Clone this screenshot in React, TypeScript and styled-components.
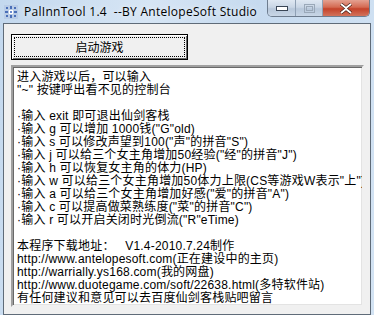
import React from "react";
import styled, { createGlobalStyle } from "styled-components";

const GlobalStyle = createGlobalStyle`
  html, body {
    margin: 0;
    padding: 0;
    background: #c8daee;
  }
`;

const Window = styled.div`
  width: 374px;
  height: 315px;
  box-sizing: border-box;
  display: flex;
  flex-direction: column;
  padding: 0 3px 3px 3px;
  background: linear-gradient(100deg, #c3d8ee 0%, #d6e5f4 35%, #c6daef 60%, #d3e3f3 100%);
  font-family: "Liberation Sans", "Noto Sans CJK SC", sans-serif;
`;

const TitleBar = styled.div`
  height: 23px;
  display: flex;
  align-items: flex-start;
  flex-shrink: 0;
`;

const AppIcon = styled.svg`
  width: 14px;
  height: 14px;
  margin: 5px 0 0 1px;
`;

const Title = styled.span`
  margin: 4px 0 0 6px;
  font-family: "Open Sans", "Noto Sans", sans-serif;
  font-size: 12px;
  letter-spacing: 0.28px;
  line-height: 15px;
  color: #000;
  text-shadow: 0 0 6px rgba(255, 255, 255, 0.9);
  white-space: pre;
`;

const Controls = styled.div`
  margin-left: auto;
  margin-right: 1px;
  display: flex;
  height: 16px;
  border: 1px solid #6d7c8e;
  border-top: none;
  border-radius: 0 0 5px 5px;
  overflow: hidden;
`;

const CtrlButton = styled.div<{ $w: number; $close?: boolean }>`
  width: ${(p) => p.$w}px;
  display: flex;
  align-items: center;
  justify-content: center;
  border-left: ${(p) => (p.$close ? "1px solid #7a4a44" : "none")};
  & + & {
    border-left: 1px solid #8fa0b4;
  }
  background: ${(p) =>
    p.$close
      ? "linear-gradient(#e4a191 0%, #d46a52 45%, #c4422a 55%, #d2735c 100%)"
      : "linear-gradient(#dfe8f2 0%, #c9d6e5 45%, #b7c7da 55%, #c8d6e6 100%)"};
`;

const Client = styled.div`
  flex: 1;
  display: flex;
  flex-direction: column;
  background: #f0f0f0;
  border: 1px solid #5f6b78;
  padding: 10px 5px 7px 7px;
`;

const LaunchButton = styled.button`
  width: 177px;
  height: 26px;
  padding: 2px;
  box-sizing: border-box;
  border: 1px solid #000;
  background: #f0f0f0;
  box-shadow: inset 1px 1px 0 #fff, inset -1px -1px 0 #696969;
  font-family: "Noto Sans CJK SC", sans-serif;
  font-size: 12px;
  color: #000;
  display: flex;
`;

const FocusRing = styled.span`
  flex: 1;
  border: 1px dotted #000;
  display: flex;
  align-items: center;
  justify-content: center;
  line-height: 14px;
`;

const TextBox = styled.div`
  margin-top: 5px;
  width: 353px;
  flex: 1;
  box-sizing: border-box;
  background: #fff;
  border-style: solid;
  border-width: 2px;
  border-color: #a0a0a0 #f0f0f0 #f0f0f0 #a0a0a0;
  box-shadow: inset 1px 1px 0 #696969, inset -1px -1px 0 #e3e3e3;
  padding: 4px 4px 0 4px;
  font-size: 12px;
  letter-spacing: 0.2px;
  line-height: 13px;
  color: #000;
  overflow: hidden;
`;

const Line = styled.div`
  white-space: pre;
  height: 13px;
`;

const lines = [
  "进入游戏以后，可以输入",
  "\"~\" 按键呼出看不见的控制台",
  "",
  "·输入 exit 即可退出仙剑客栈",
  "·输入 g 可以增加 1000钱(\"G\"old)",
  "·输入 s 可以修改声望到100(\"声\"的拼音\"S\")",
  "·输入 j 可以给三个女主角增加50经验(\"经\"的拼音\"J\")",
  "·输入 h 可以恢复女主角的体力(HP)",
  "·输入 w 可以给三个女主角增加50体力上限(CS等游戏W表示\"上\")",
  "·输入 a 可以给三个女主角增加好感(\"爱\"的拼音\"A\")",
  "·输入 c 可以提高做菜熟练度(\"菜\"的拼音\"C\")",
  "·输入 r 可以开启关闭时光倒流(\"R\"eTime)",
  "",
  "本程序下载地址：   V1.4-2010.7.24制作",
  "http://www.antelopesoft.com(正在建设中的主页)",
  "http://warrially.ys168.com(我的网盘)",
  "http://www.duotegame.com/soft/22638.html(多特软件站)",
  "有任何建议和意见可以去百度仙剑客栈贴吧留言",
];

const App: React.FC = () => {
  return (
    <>
      <GlobalStyle />
      <Window>
        <TitleBar>
          <AppIcon viewBox="0 0 14 14">
            <rect x="0" y="0" width="14" height="14" fill="#b9cce6" />
            <path d="M2 2h2v2H2zM6 1h2v3H6zM10 2h2v2h-2zM1 6h3v2H1zM10 6h3v2h-3zM2 10h2v2H2zM6 10h2v3H6zM10 10h2v2h-2z" fill="#4a6fb8" />
            <path d="M5 5h4v4H5z" fill="#ffffff" />
            <path d="M6 6h2v2H6z" fill="#6c8cd0" />
          </AppIcon>
          <Title>PalInnTool 1.4  --BY AntelopeSoft Studio</Title>
          <Controls>
            <CtrlButton $w={27}>
              <svg width="12" height="5" viewBox="0 0 12 5">
                <rect x="0.5" y="0.5" width="11" height="4" fill="#fff" stroke="#3a4656" />
              </svg>
            </CtrlButton>
            <CtrlButton $w={26}>
              <svg width="11" height="9" viewBox="0 0 11 9">
                <rect x="0.5" y="0.5" width="10" height="8" fill="none" stroke="#9aa8b8" />
                <rect x="2.5" y="2.5" width="6" height="4" fill="none" stroke="#9aa8b8" />
              </svg>
            </CtrlButton>
            <CtrlButton $w={46} $close>
              <svg width="14" height="11" viewBox="0 0 14 11">
                <path d="M2 1l5 4 5-4M2 10l5-4 5 4" stroke="#3c1a14" strokeWidth="3.2" fill="none" />
                <path d="M2 1l5 4 5-4M2 10l5-4 5 4" stroke="#fff" strokeWidth="1.8" fill="none" />
              </svg>
            </CtrlButton>
          </Controls>
        </TitleBar>
        <Client>
          <LaunchButton>
            <FocusRing>启动游戏</FocusRing>
          </LaunchButton>
          <TextBox>
            {lines.map((l, i) => (
              <Line key={i}>{l}</Line>
            ))}
          </TextBox>
        </Client>
      </Window>
    </>
  );
};

export default App;
